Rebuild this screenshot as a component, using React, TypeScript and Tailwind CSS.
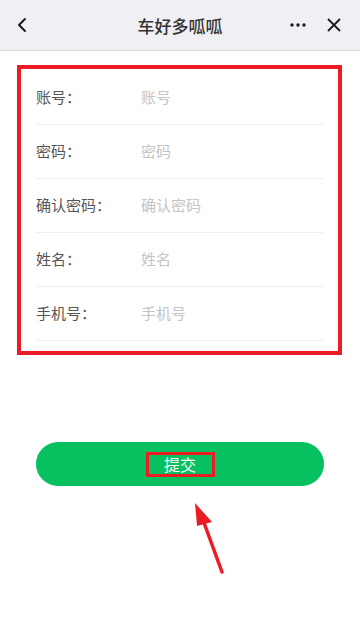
import { useState } from 'react';

const fields = [
  { label: '账号：', placeholder: '账号' },
  { label: '密码：', placeholder: '密码' },
  { label: '确认密码：', placeholder: '确认密码' },
  { label: '姓名：', placeholder: '姓名' },
  { label: '手机号：', placeholder: '手机号' },
];

export default function App() {
  const [values, setValues] = useState<Record<string, string>>({});

  return (
    <div
      className="relative w-[360px] h-[619px] bg-white overflow-hidden"
      style={{ fontFamily: '"Noto Sans CJK SC", "Noto Sans", sans-serif' }}
    >
      {/* Top bar */}
      <div className="h-[51px] bg-[#efeff4] border-b border-[#d9d9de] flex items-center justify-between px-[15px]">
        <svg width="12" height="16" viewBox="0 0 12 16" className="ml-[1px]">
          <path d="M9 2 L3 8 L9 14" fill="none" stroke="#1a1a1a" strokeWidth="2" strokeLinecap="round" strokeLinejoin="round" />
        </svg>
        <h1 className="absolute left-0 right-0 top-[13px] text-center text-[17px] font-medium text-[#333] leading-[26px] pointer-events-none">
          车好多呱呱
        </h1>
        <div className="flex items-center gap-[21px]">
          <svg width="16" height="4" viewBox="0 0 16 4">
            <circle cx="2" cy="2" r="1.7" fill="#1a1a1a" />
            <circle cx="8" cy="2" r="1.7" fill="#1a1a1a" />
            <circle cx="14" cy="2" r="1.7" fill="#1a1a1a" />
          </svg>
          <svg width="14" height="14" viewBox="0 0 14 14" className="mr-[4px]">
            <path d="M1.5 1.5 L12.5 12.5 M12.5 1.5 L1.5 12.5" stroke="#1a1a1a" strokeWidth="1.8" strokeLinecap="round" />
          </svg>
        </div>
      </div>

      {/* Form */}
      <div className="mt-[14px] mx-[17px] w-[325px] border-4 border-[#ec1c24] px-[15px] pt-[2px] pb-[10px]">
        {fields.map((f) => (
          <div key={f.label} className="h-[54px] flex items-center border-b border-[#efefef]">
            <span className="w-[105px] text-[15px] text-[#555]">{f.label}</span>
            <input
              className="flex-1 text-[15px] text-[#333] placeholder:text-[#c4c4c4] outline-none bg-transparent"
              placeholder={f.placeholder}
              value={values[f.label] ?? ''}
              onChange={(e) => setValues({ ...values, [f.label]: e.target.value })}
            />
          </div>
        ))}
      </div>

      {/* Submit */}
      <div className="mt-[87px] mx-[36px]">
        <button className="w-full h-[44px] rounded-full bg-[#07c160] flex items-center justify-center">
          <span className="w-[69px] h-[25px] border-[3px] border-[#ec1c24] flex items-center justify-center text-[16px] text-white leading-none">
            提交
          </span>
        </button>
      </div>

      {/* Annotation arrow */}
      <svg className="absolute left-[185px] top-[498px]" width="45" height="80" viewBox="0 0 45 80">
        <line x1="37" y1="74" x2="18" y2="22" stroke="#ec1c24" strokeWidth="3.5" strokeLinecap="round" />
        <polygon points="10,5 27,24 12,28" fill="#ec1c24" />
      </svg>
    </div>
  );
}
